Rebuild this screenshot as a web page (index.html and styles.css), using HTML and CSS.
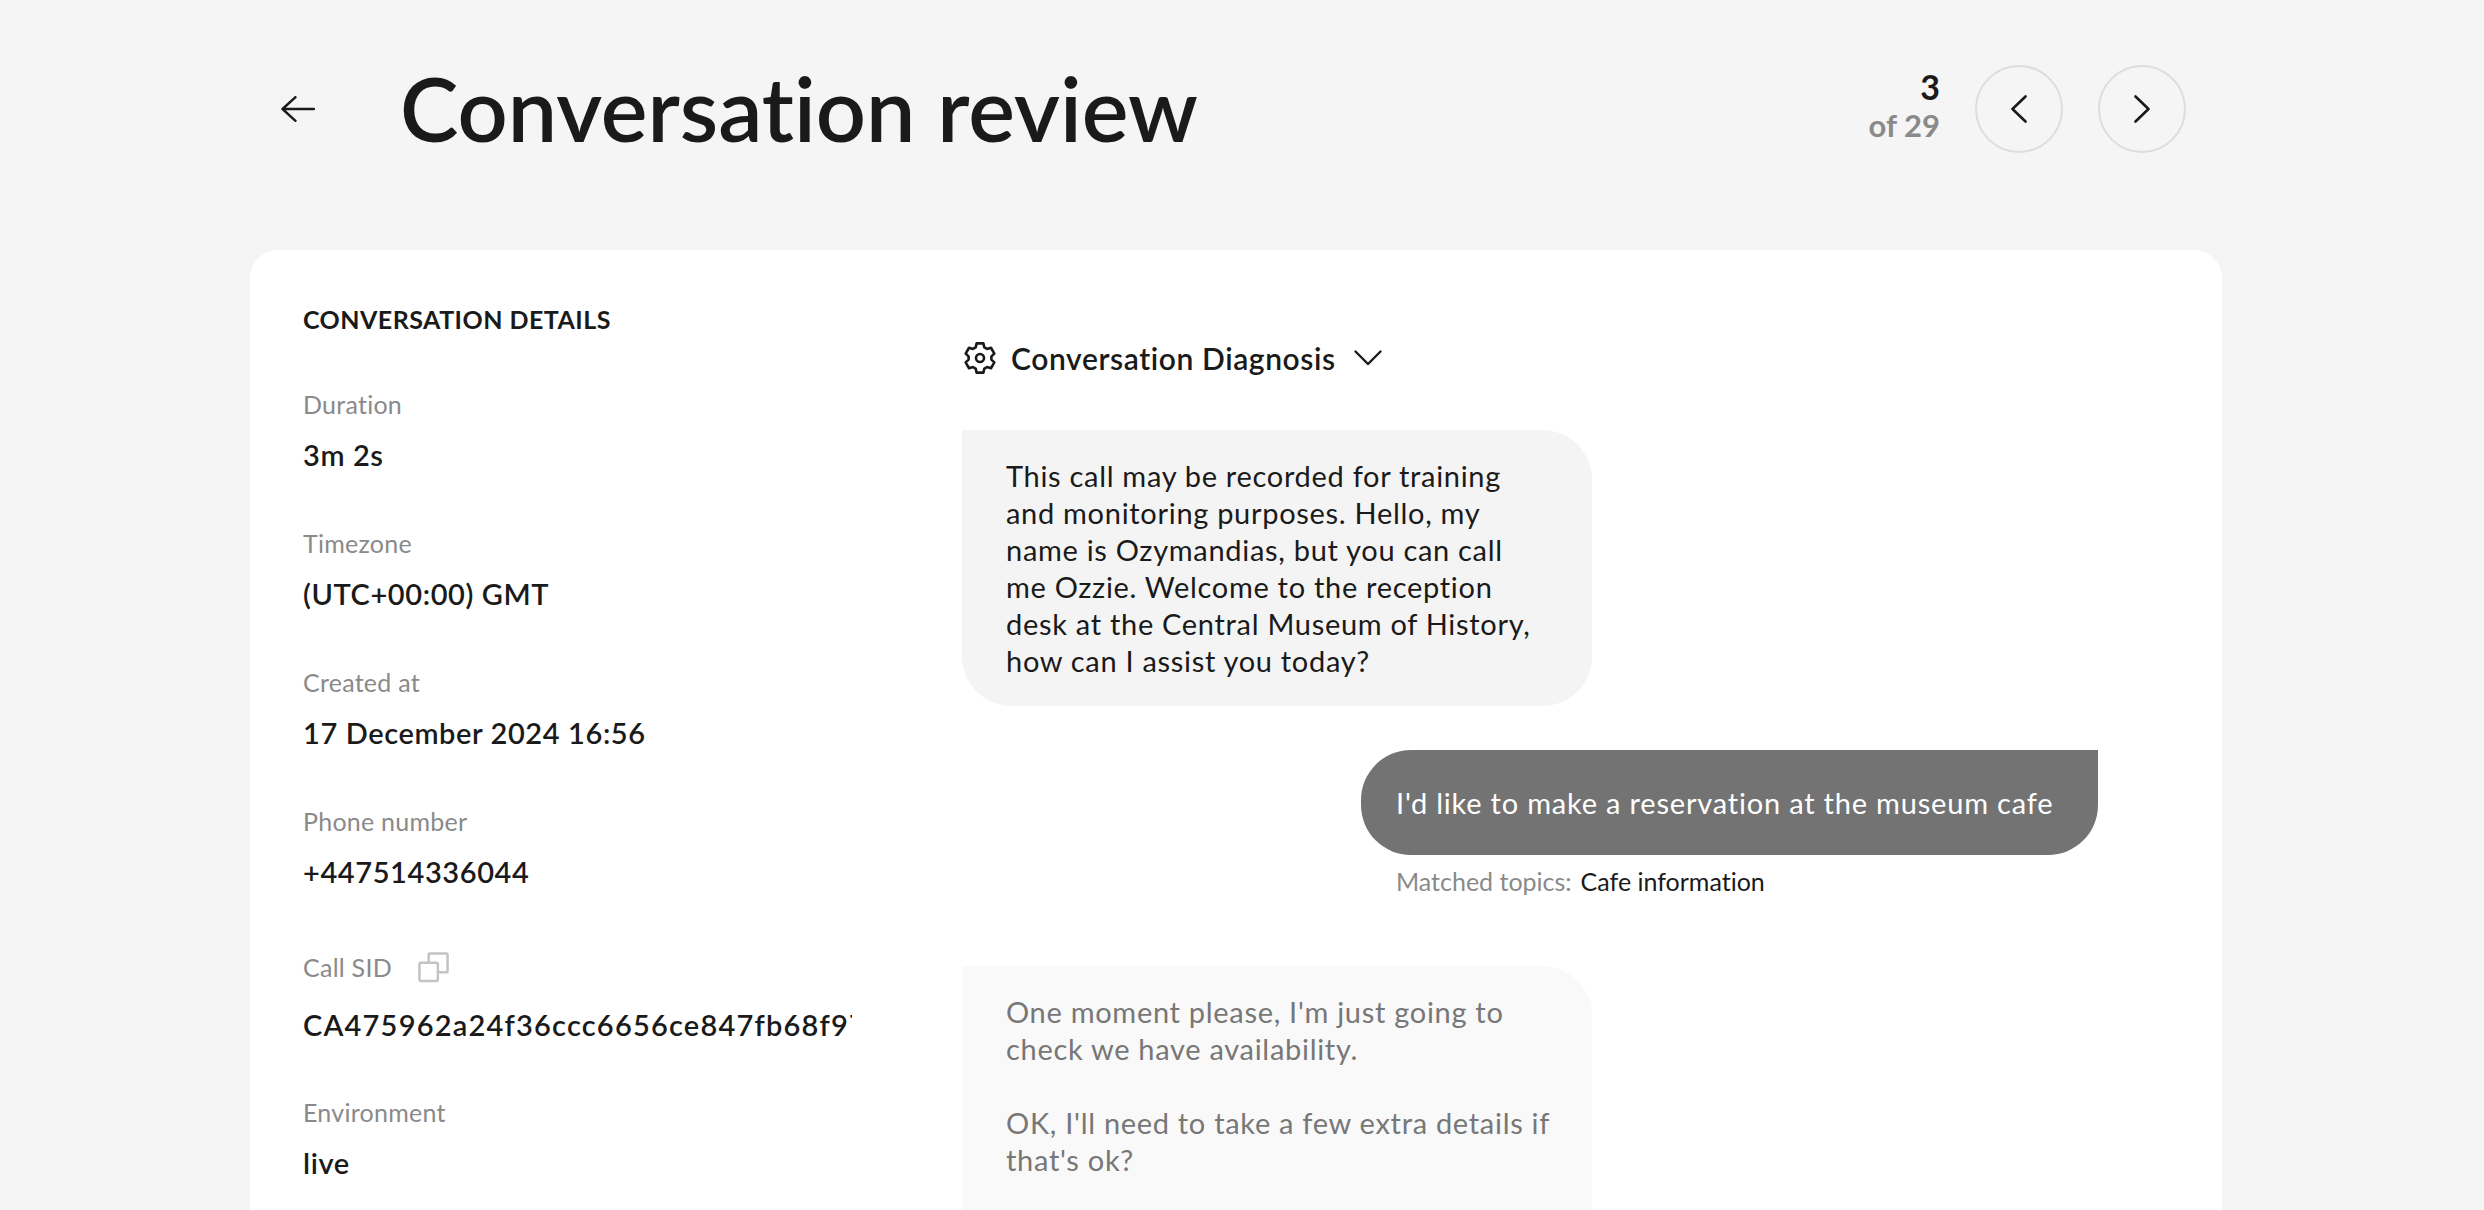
FILE: index.html
```html
<!DOCTYPE html>
<html lang="en">

<head>
    <meta charset="UTF-8">
    <meta name="viewport" content="width=device-width, initial-scale=1.0">
    <title>Conversation review</title>
    <link rel="stylesheet" href="styles.css">
</head>

<body>
    <div class="page">
        <header class="top-bar">
            <button class="back-button" aria-label="Back">
                <svg width="34" height="26" viewBox="0 0 34 26" fill="none" stroke="#1a1a1a" stroke-width="2.4" stroke-linecap="round" stroke-linejoin="round">
                    <path d="M33 13H1.5M14.5 1.2L1.5 13L14.5 24.8" />
                </svg>
            </button>
            <h1 class="page-title">Conversation review</h1>
            <div class="pager">
                <div class="pager-count">
                    <span class="pager-current">3</span>
                    <span class="pager-total">of 29</span>
                </div>
                <button class="round-button" aria-label="Previous">
                    <svg width="16" height="28" viewBox="0 0 16 28" fill="none" stroke="#1a1a1a" stroke-width="2.6" stroke-linecap="round" stroke-linejoin="round">
                        <path d="M14.5 1.5L1.5 14L14.5 26.5" />
                    </svg>
                </button>
                <button class="round-button" aria-label="Next">
                    <svg width="16" height="28" viewBox="0 0 16 28" fill="none" stroke="#1a1a1a" stroke-width="2.6" stroke-linecap="round" stroke-linejoin="round">
                        <path d="M1.5 1.5L14.5 14L1.5 26.5" />
                    </svg>
                </button>
            </div>
        </header>

        <main class="card">
            <aside class="details">
                <h2 class="details-title">CONVERSATION DETAILS</h2>
                <div class="field">
                    <div class="field-label">Duration</div>
                    <div class="field-value">3m 2s</div>
                </div>
                <div class="field">
                    <div class="field-label">Timezone</div>
                    <div class="field-value">(UTC+00:00) GMT</div>
                </div>
                <div class="field">
                    <div class="field-label">Created at</div>
                    <div class="field-value">17 December 2024 16:56</div>
                </div>
                <div class="field">
                    <div class="field-label">Phone number</div>
                    <div class="field-value">+447514336044</div>
                </div>
                <div class="field field-sid">
                    <div class="field-label">Call SID
                        <svg class="copy-icon" width="31" height="31" viewBox="0 0 32 32" fill="none" stroke="#c4c4c4" stroke-width="2.6" stroke-linejoin="round">
                            <rect x="1.5" y="11" width="19" height="19" rx="1.5" />
                            <path d="M11 11V2.5a1 1 0 0 1 1-1h17.5a1 1 0 0 1 1 1V20a1 1 0 0 1-1 1H20.5" />
                        </svg>
                    </div>
                    <div class="field-value field-clip">CA475962a24f36ccc6656ce847fb68f97a</div>
                </div>
                <div class="field">
                    <div class="field-label">Environment</div>
                    <div class="field-value">live</div>
                </div>
            </aside>

            <section class="conversation">
                <div class="diagnosis">
                    <svg width="32" height="32" viewBox="0 0 32 32" fill="none" stroke="#1a1a1a" stroke-width="2.6" stroke-linecap="round" stroke-linejoin="round">
                        <circle cx="16" cy="16" r="4" />
                        <path d="M11.69 5.34L12.63 1.38H19.37L20.31 5.34L23.08 6.94L26.97 5.77L30.34 11.61L27.39 14.4V17.6L30.34 20.39L26.97 26.23L23.08 25.06L20.31 26.66L19.37 30.62H12.63L11.69 26.66L8.92 25.06L5.03 26.23L1.66 20.39L4.61 17.6V14.4L1.66 11.61L5.03 5.77L8.92 6.94Z" />
                    </svg>
                    <span class="diagnosis-text">Conversation Diagnosis</span>
                    <svg width="28" height="16" viewBox="0 0 28 16" fill="none" stroke="#1a1a1a" stroke-width="2.4" stroke-linecap="round" stroke-linejoin="round">
                        <path d="M1.5 1.5L14 14L26.5 1.5" />
                    </svg>
                </div>

                <div class="bubble bubble-bot">This call may be recorded for training and monitoring purposes. Hello, my name is Ozymandias, but you can call<br>me Ozzie. Welcome to the reception desk at the Central Museum of History, how can I assist you today?</div>

                <div class="user-turn">
                    <div class="bubble bubble-user">I'd like to make a reservation at the museum cafe</div>
                    <div class="topics">
                        <span class="topics-label">Matched topics:</span>
                        <span class="topics-value">Cafe information</span>
                    </div>
                </div>

                <div class="bubble bubble-bot bubble-faded">One moment please, I'm just going to check we have availability.<br><br>OK, I'll need to take a few extra details if that's ok?</div>
            </section>
        </main>
    </div>
</body>

</html>
```

FILE: styles.css
```css
html,
body {
    margin: 0;
    height: 1210px;
    overflow: hidden;
}

body {
    background-color: #f5f5f5;
    color: #1a1a1a;
    font-family: Lato, "Open Sans", sans-serif;
    font-variant-ligatures: none;
}

button {
    padding: 0;
    background: none;
    border: 0;
    cursor: pointer;
}

.page {
    width: 1972px;
    margin-left: 250px;
}

/* header */
.top-bar {
    display: flex;
    align-items: center;
    height: 250px;
    padding: 0 36px 32px 31px;
    box-sizing: border-box;
}

.back-button {
    display: flex;
    width: 119px;
}

.page-title {
    margin: 0 0 2px;
    font-size: 88px;
    font-weight: 600;
    line-height: 1;
}

.pager {
    display: flex;
    align-items: center;
    gap: 35px;
    margin-left: auto;
}

.pager-count {
    display: flex;
    flex-direction: column;
    align-items: flex-end;
    margin-bottom: 6px;
    font-size: 31px;
    font-weight: 700;
    line-height: 38px;
}

.pager-current {
    font-size: 34px;
}

.pager-total {
    color: #8a8a8a;
}

.round-button {
    display: flex;
    align-items: center;
    justify-content: center;
    width: 88px;
    height: 88px;
    border: 2px solid #dddddd;
    border-radius: 50%;
    box-sizing: border-box;
}

/* card */
.card {
    display: flex;
    background-color: #ffffff;
    border-radius: 28px;
    height: 1000px;
}

.details {
    width: 658px;
    padding: 54px 0 0 53px;
    box-sizing: border-box;
}

.details-title {
    margin: 0 0 55px;
    font-size: 25px;
    font-weight: 700;
    letter-spacing: 0.47px;
    line-height: 30px;
}

.field {
    margin-bottom: 53px;
}

.field-label {
    display: flex;
    align-items: center;
    gap: 24px;
    height: 30px;
    font-size: 25px;
    letter-spacing: 0.25px;
    color: #8a8a8a;
}

.field-value {
    margin-top: 16px;
    font-size: 29px;
    font-weight: 600;
    letter-spacing: 0.6px;
    line-height: 40px;
    color: #1a1a1a;
}

.field-clip {
    width: 549px;
    overflow: hidden;
    white-space: nowrap;
    letter-spacing: 1.2px;
}

.field-sid {
    margin-bottom: 52px;
}

.field-sid .field-label {
    height: 44px;
    gap: 26px;
}

.conversation {
    flex: 1;
    padding: 88px 124px 0 54px;
    box-sizing: border-box;
}

.diagnosis {
    display: flex;
    align-items: center;
    height: 40px;
    margin-bottom: 52px;
    padding-left: 2px;
}

.diagnosis-text {
    margin: 0 18px 0 15px;
    font-size: 30px;
    font-weight: 600;
    letter-spacing: 0.6px;
}

.bubble {
    font-size: 29px;
    letter-spacing: 0.7px;
    line-height: 37px;
    box-sizing: border-box;
}

.bubble-bot {
    width: 630px;
    padding: 27px 34px 27px 44px;
    background-color: #f4f4f4;
    border-radius: 0 50px 50px 50px;
}

.user-turn {
    display: flex;
    flex-direction: column;
    align-items: flex-end;
    margin: 44px 0 68px;
}

.bubble-user {
    width: 737px;
    padding: 34px 30px 34px 35px;
    letter-spacing: 0.8px;
    background-color: #737373;
    color: #ffffff;
    border-radius: 50px 0 50px 50px;
}

.topics {
    display: flex;
    gap: 9px;
    width: 737px;
    padding: 9px 35px 0;
    box-sizing: border-box;
    font-size: 25px;
    line-height: 34px;
}

.topics-label {
    color: #8a8a8a;
}

.topics-value {
    color: #1a1a1a;
}

.bubble-faded {
    padding-bottom: 90px;
    background-color: #f9f9f9;
    color: #777777;
}
```
